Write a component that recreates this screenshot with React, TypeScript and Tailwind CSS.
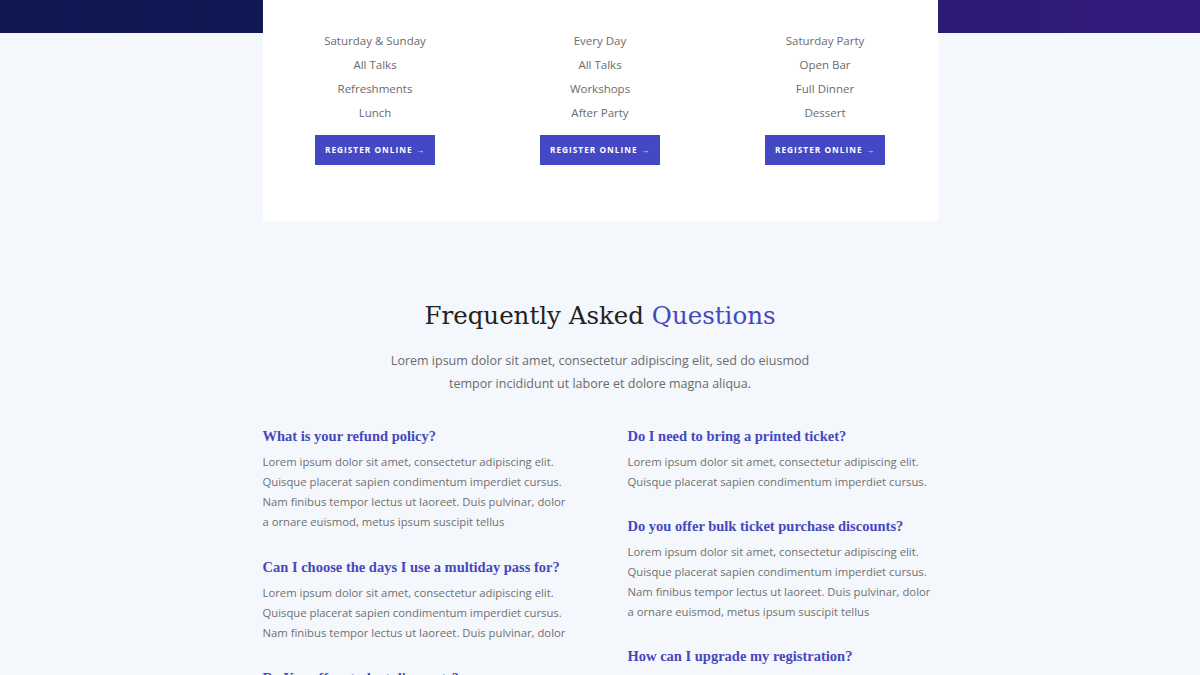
const tiers = [
  ["Saturday & Sunday", "All Talks", "Refreshments", "Lunch"],
  ["Every Day", "All Talks", "Workshops", "After Party"],
  ["Saturday Party", "Open Bar", "Full Dinner", "Dessert"],
];

const faqLeft = [
  {
    q: "What is your refund policy?",
    a: "Lorem ipsum dolor sit amet, consectetur adipiscing elit. Quisque placerat sapien condimentum imperdiet cursus. Nam finibus tempor lectus ut laoreet. Duis pulvinar, dolor a ornare euismod, metus ipsum suscipit tellus",
  },
  {
    q: "Can I choose the days I use a multiday pass for?",
    a: "Lorem ipsum dolor sit amet, consectetur adipiscing elit. Quisque placerat sapien condimentum imperdiet cursus. Nam finibus tempor lectus ut laoreet. Duis pulvinar, dolor",
  },
  {
    q: "Do You offer student discounts?",
    a: "Lorem ipsum dolor sit amet, consectetur adipiscing elit. Quisque placerat sapien condimentum imperdiet cursus.",
  },
];

const faqRight = [
  {
    q: "Do I need to bring a printed ticket?",
    a: "Lorem ipsum dolor sit amet, consectetur adipiscing elit. Quisque placerat sapien condimentum imperdiet cursus.",
  },
  {
    q: "Do you offer bulk ticket purchase discounts?",
    a: "Lorem ipsum dolor sit amet, consectetur adipiscing elit. Quisque placerat sapien condimentum imperdiet cursus. Nam finibus tempor lectus ut laoreet. Duis pulvinar, dolor a ornare euismod, metus ipsum suscipit tellus",
  },
  {
    q: "How can I upgrade my registration?",
    a: "Lorem ipsum dolor sit amet, consectetur adipiscing elit. Quisque placerat sapien condimentum imperdiet cursus.",
  },
];

function FaqItem({ q, a }: { q: string; a: string }) {
  return (
    <div>
      <h3 className="mb-[6px] text-[14.5px] font-bold leading-[20px] text-[#4548bd] [font-family:'Liberation_Serif',serif]">
        {q}
      </h3>
      <p className="text-[11.3px] leading-[20px] text-[#707070]">{a}</p>
    </div>
  );
}

export default function App() {
  return (
    <div className="h-screen overflow-hidden bg-[#f4f7fb] bg-[linear-gradient(90deg,#0f1650,#121a56_35%,#2b1a70_70%,#341a7d)] bg-[length:100%_33px] bg-no-repeat [font-family:'Open_Sans',sans-serif]">
      <div className="mx-auto w-[675px]">
        <section className="grid grid-cols-3 bg-white pt-[29px] pb-[56px]">
          {tiers.map((items, i) => (
            <div key={i} className="flex flex-col items-center">
              {items.map((t) => (
                <div key={t} className="text-[11.5px] leading-[24px] text-[#6b6b6b]">
                  {t}
                </div>
              ))}
              <button className="mt-[10px] h-[30px] w-[120px] bg-[#4548c4] text-[8.3px] font-bold tracking-[1px] text-white">
                REGISTER ONLINE →
              </button>
            </div>
          ))}
        </section>

        <section className="pt-[77px]">
          <h2 className="text-center text-[24.5px] leading-[36px] text-[#222] [font-family:'DejaVu_Serif',serif]">
            Frequently Asked <span className="text-[#4548bd]">Questions</span>
          </h2>
          <p className="mx-auto mt-[15px] w-[430px] text-center text-[12.5px] leading-[23px] text-[#6b6b6b]">
            Lorem ipsum dolor sit amet, consectetur adipiscing elit, sed do eiusmod tempor incididunt ut labore et dolore magna aliqua.
          </p>
          <div className="mt-[31px] grid grid-cols-2 gap-x-[55px]">
            <div className="flex flex-col gap-[25px]">
              {faqLeft.map((f) => (
                <FaqItem key={f.q} {...f} />
              ))}
            </div>
            <div className="flex flex-col gap-[24px]">
              {faqRight.map((f) => (
                <FaqItem key={f.q} {...f} />
              ))}
            </div>
          </div>
        </section>
      </div>
    </div>
  );
}
